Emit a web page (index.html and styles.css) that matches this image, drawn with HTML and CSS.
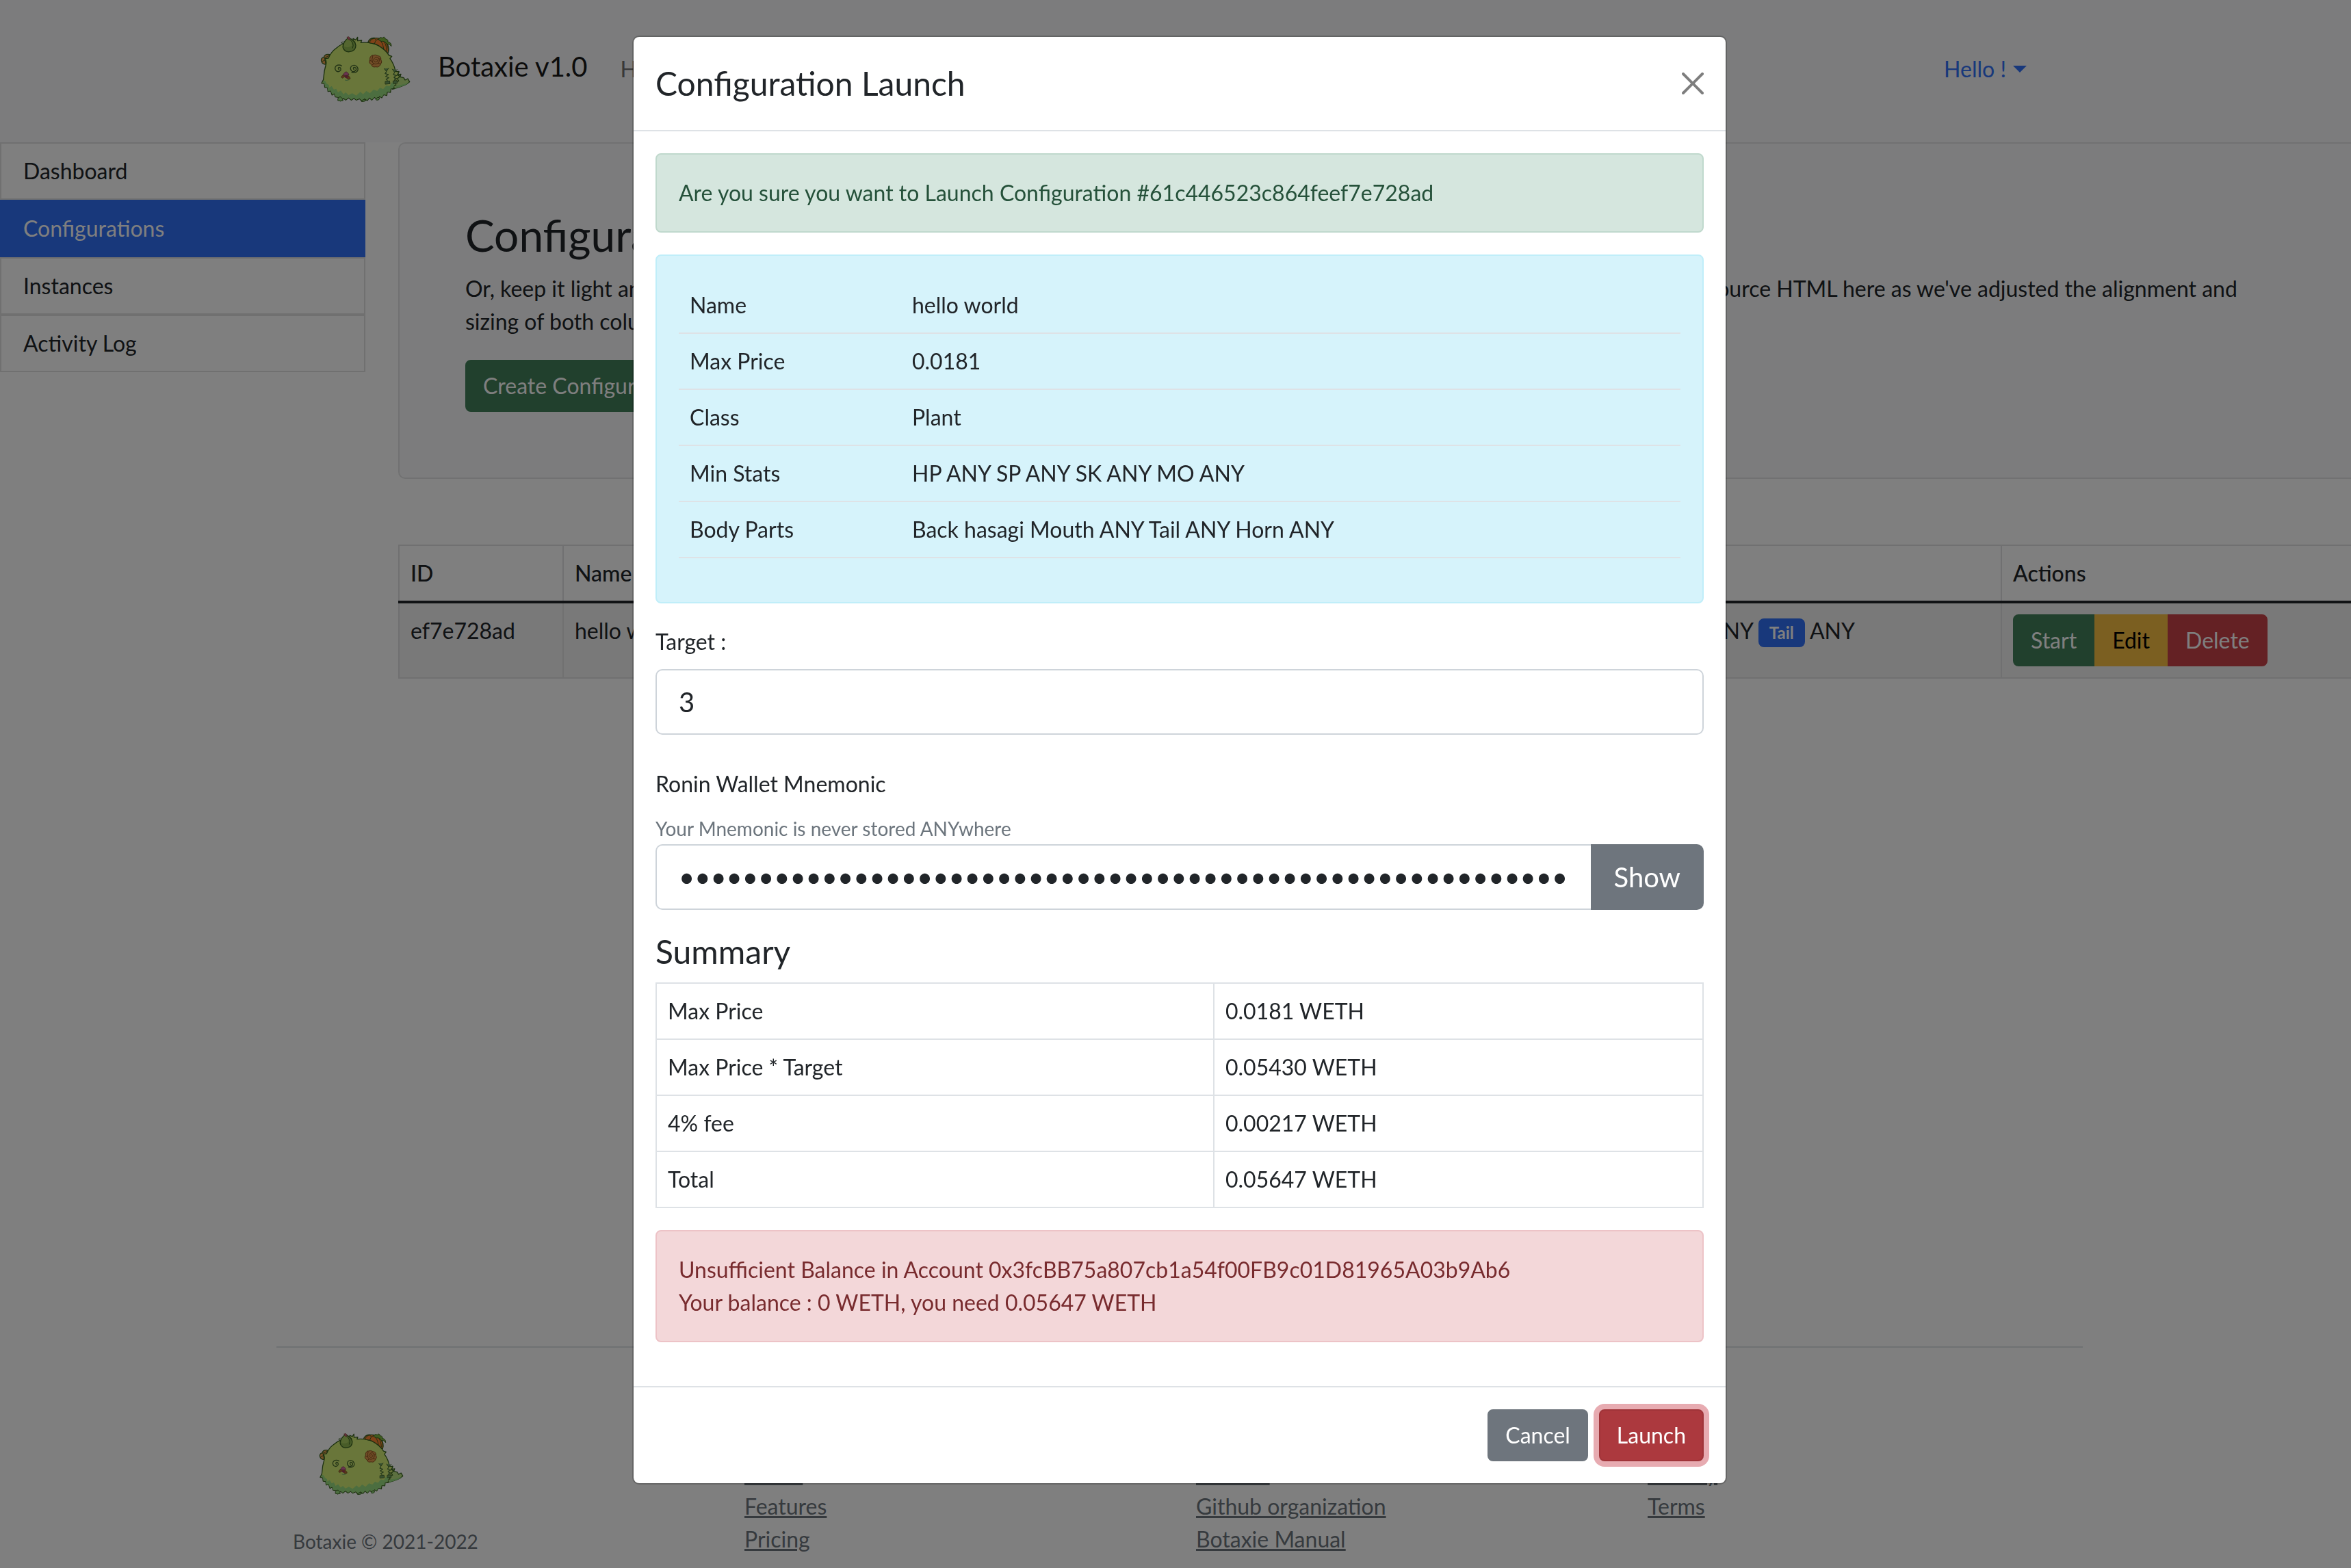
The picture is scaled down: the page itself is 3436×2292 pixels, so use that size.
FILE: index.html
```html
<!DOCTYPE html>
<html lang="en">
<head>
<meta charset="utf-8">
<title>Botaxie v1.0</title>
<link rel="stylesheet" href="styles.css">
</head>
<body>
<svg class="sprite" aria-hidden="true">
  <symbol id="axie" viewBox="84 66 396 292">
    <g stroke="#386020" stroke-width="4" stroke-linejoin="round" stroke-linecap="round">
      <path fill="#b8e080" d="M400 300 L412 230 L428 222 L424 236 L438 234 L434 246 L450 250 L456 260 L468 254 L476 268 Q462 284 408 298Z"/>
      <path fill="#98dc80" d="M420 284 Q452 280 474 270 Q460 286 408 298Z" stroke="none"/>
      <path fill="#f0a050" d="M126 148 Q104 144 100 160 Q84 164 90 180 Q96 194 112 190Z"/>
      <path fill="none" d="M102 162 Q116 158 122 152 M94 178 Q108 170 116 168 M104 164 L108 190" stroke-width="3"/>
      <path fill="#ff8430" d="M292 98 Q300 72 326 76 Q356 74 374 94 Q390 118 382 140 L340 116Z"/>
      <path fill="none" d="M312 76 Q320 84 316 104" stroke-width="3"/>
      <path fill="#d2ec74" d="M110 188 Q112 174 104 166 L120 164 Q132 136 152 122 Q170 106 190 98 L228 88 L228 78 L240 84 L248 72 L248 88 L266 86 L262 96 Q310 92 340 110 Q368 126 386 152 L398 156 L390 166 Q408 190 414 222 L430 224 L422 238 L434 244 L422 254 L428 264 L414 270 L416 282 L406 284 L408 298 L394 298 L392 314 L378 312 L376 328 L362 324 L354 338 L344 332 L334 346 L322 336 L310 348 L300 338 L290 350 L278 342 L268 354 L256 342 L242 348 L232 340 L220 348 L208 338 L196 348 L186 340 L172 352 L164 336 L150 334 L146 320 L136 326 L130 308 L118 310 L116 294 L104 292 L102 276 L90 274 L98 258 Q100 220 110 188Z"/>
      <path fill="#ff8430" d="M300 96 Q306 78 322 78 Q332 82 330 102Z" stroke-width="3"/>
      <path fill="#ff8430" d="M322 100 Q328 76 350 80 Q372 88 380 112 Q384 128 382 142 Q366 124 346 112 Q338 106 322 100Z" stroke-width="3"/>
      <path fill="none" d="M340 80 Q358 92 362 122 M358 84 Q374 98 376 132" stroke-width="3"/>
      <path fill="#80b840" d="M340 82 Q346 68 356 76 Q366 66 370 80 Q384 82 380 92 Q396 94 396 112 Q386 98 376 102 Q368 88 352 90Z" stroke-width="3"/>
      <path fill="#98dc80" stroke="none" d="M98 262 Q108 262 112 276 L122 282 L124 294 L134 286 L144 302 L154 298 L162 314 L174 306 L186 322 L196 314 L208 326 L224 318 L242 328 L260 312 L272 322 L286 308 L302 318 L318 302 L334 308 L346 294 L360 300 L374 284 L388 288 L398 270 L412 274 L404 296 L392 298 L390 312 L376 312 L374 324 L362 324 L354 336 L344 330 L334 342 L322 334 L310 346 L300 336 L290 348 L278 340 L268 350 L256 340 L242 346 L232 338 L220 346 L208 336 L196 346 L186 338 L172 348 L164 334 L150 332 L146 318 L136 322 L130 306 L118 308 L116 292 L106 290 L102 274 L94 272Z"/>
      <path fill="#98dc80" d="M162 340 Q164 332 174 334 Q184 342 184 350 Q172 354 162 350Z M264 350 Q274 342 286 348 Q280 356 266 354Z M328 344 Q334 332 344 338 Q346 348 332 348Z" stroke-width="3"/>
      <path fill="#90b850" d="M208 74 Q180 96 184 118 Q192 138 212 136 Q240 134 240 108 Q238 88 208 74Z"/>
      <path fill="#a8cc60" d="M208 76 Q184 98 190 114 Q206 120 222 110 Q226 90 208 76Z" stroke="none"/>
      <path fill="none" d="M184 92 L176 96 L186 104 M210 80 Q236 96 226 120 M220 80 L238 94" stroke-width="3"/>
      <path fill="#d06080" d="M202 72 Q208 66 214 74 L214 84 Q206 86 202 72Z" stroke="#805040" stroke-width="2"/>
      <path fill="#e0984c" stroke="#885020" stroke-width="3" d="M312 152 Q326 146 338 154 Q352 156 350 170 Q358 182 348 192 Q342 206 328 202 Q312 206 308 192 Q294 184 302 172 Q300 156 312 152Z"/>
      <path fill="none" stroke="#885020" stroke-width="3" d="M314 156 Q308 170 314 184 Q326 196 340 184 Q348 170 336 160 Q322 158 318 172 Q324 188 336 176 Q336 166 326 170 M302 174 L312 178 M312 194 L320 188 M348 190 L338 186 M348 168 L340 166"/>
    </g>
    <g fill="none" stroke="#44662c" stroke-width="4" stroke-linecap="round">
      <path d="M166 214 Q160 208 166 204 Q176 204 174 216 Q166 228 154 220 Q144 208 154 198 Q166 190 178 198"/>
      <path d="M232 214 Q226 208 232 204 Q242 204 242 214 Q236 226 224 222 Q212 212 220 200 Q232 190 244 200 Q254 212 246 222 Q236 232 222 226"/>
      <path fill="#70a060" stroke-width="3" d="M364 210 L374 222 L384 208 M374 222 L368 232 L384 236 L370 244 L386 250 L372 256 L380 264 M370 266 L388 264 L390 276 L370 278Z M400 212 L410 226 L422 214 M410 226 L404 236 L420 240 L406 248 L420 254 L408 262 M404 264 L420 262 L422 274 L406 276Z"/>
    </g>
    <path fill="#b07030" stroke="#684020" stroke-width="2" d="M176 248 Q180 234 196 238 Q214 240 216 254 L206 258 L200 250 L190 246 L182 252Z"/>
    <path fill="#d0689c" stroke="#703048" stroke-width="2" d="M184 238 Q192 222 200 224 Q210 232 210 238 Q196 242 184 238Z"/>
    <path fill="#a03858" d="M190 242 L206 242 L202 254 L192 248Z"/>
    <path fill="none" stroke="#70b070" stroke-width="3" d="M192 260 Q202 264 212 258"/>
  </symbol>
</svg>

<div class="page">
  <nav class="navbar">
    <div class="container navbar-inner">
      <a class="brand" href="#"><svg class="brand-logo" role="img" aria-label="Botaxie logo"><use href="#axie"/></svg><span class="brand-name">Botaxie v1.0</span></a>
      <a class="nav-link" href="#">Home</a>
      <a class="user-menu" href="#">Hello !<span class="caret"></span></a>
    </div>
  </nav>

  <main class="main">
    <aside class="sidebar">
      <a class="side-item" href="#">Dashboard</a>
      <a class="side-item active" href="#">Configurations</a>
      <a class="side-item" href="#">Instances</a>
      <a class="side-item" href="#">Activity Log</a>
    </aside>
    <div class="content">
      <section class="hero">
        <h2>Configurations</h2>
        <p>Or, keep it light and add a border for an added definition to the boundaries of your content. Be sure to look under the hood at the source HTML here as we've adjusted the alignment and sizing of both column's content for equal-height.</p>
        <button class="btn btn-success" type="button">Create Configuration</button>
      </section>
      <table class="table configs">
        <colgroup><col class="col-id"><col class="col-name"><col class="col-parts"><col></colgroup>
        <thead><tr><th>ID</th><th>Name</th><th>Body Parts</th><th>Actions</th></tr></thead>
        <tbody>
          <tr>
            <td>ef7e728ad</td>
            <td>hello world</td>
            <td class="parts"><span class="badge">Back</span> hasagi <span class="badge">Mouth</span> ANY <span class="badge">Tail</span> ANY</td>
            <td><div class="btn-group"><button class="btn btn-success" type="button">Start</button><button class="btn btn-warning" type="button">Edit</button><button class="btn btn-danger" type="button">Delete</button></div></td>
          </tr>
        </tbody>
      </table>
    </div>
  </main>

  <footer class="container footer">
    <div class="footer-col">
      <svg class="footer-logo" role="img" aria-label="Botaxie logo"><use href="#axie"/></svg>
      <div class="muted"><small>Botaxie © 2021-2022</small></div>
    </div>
    <div class="footer-col">
      <h5>Features</h5>
      <ul><li><a href="#">Home</a></li><li><a href="#">Features</a></li><li><a href="#">Pricing</a></li></ul>
    </div>
    <div class="footer-col">
      <h5>Resources</h5>
      <ul><li><a href="#">Discord</a></li><li><a href="#">Github organization</a></li><li><a href="#">Botaxie Manual</a></li></ul>
    </div>
    <div class="footer-col">
      <h5>About</h5>
      <ul><li><a href="#">Privacy</a></li><li><a href="#">Terms</a></li></ul>
    </div>
  </footer>
</div>

<div class="backdrop">
  <div class="modal" role="dialog" aria-modal="true" aria-labelledby="modal-title">
    <header class="modal-header">
      <h4 id="modal-title">Configuration Launch</h4>
      <button class="btn-close" type="button" aria-label="Close"><svg viewBox="0 0 16 16"><path d="M.293.293a1 1 0 011.414 0L8 6.586 14.293.293a1 1 0 111.414 1.414L9.414 8l6.293 6.293a1 1 0 01-1.414 1.414L8 9.414l-6.293 6.293a1 1 0 01-1.414-1.414L6.586 8 .293 1.707a1 1 0 010-1.414z"/></svg></button>
    </header>
    <div class="modal-body">
      <div class="alert alert-success">Are you sure you want to Launch Configuration #61c446523c864feef7e728ad</div>
      <div class="alert alert-info">
        <table class="table details">
          <tbody>
            <tr><td>Name</td><td>hello world</td></tr>
            <tr><td>Max Price</td><td>0.0181</td></tr>
            <tr><td>Class</td><td>Plant</td></tr>
            <tr><td>Min Stats</td><td>HP ANY SP ANY SK ANY MO ANY</td></tr>
            <tr><td>Body Parts</td><td>Back hasagi Mouth ANY Tail ANY Horn ANY</td></tr>
          </tbody>
        </table>
      </div>
      <div class="field">
        <label for="target">Target :</label>
        <input class="input" id="target" type="text" inputmode="numeric" value="3">
      </div>
      <div class="field field-wallet">
        <label for="mnemonic">Ronin Wallet Mnemonic</label>
        <div class="muted"><small>Your Mnemonic is never stored ANYwhere</small></div>
        <div class="input-group">
          <input class="input" id="mnemonic" type="password" value="xxxxxxxxxxxxxxxxxxxxxxxxxxxxxxxxxxxxxxxxxxxxxxxxxxxxxxxx">
          <button class="btn btn-secondary btn-lg" type="button">Show</button>
        </div>
      </div>
      <h4 class="summary-title">Summary</h4>
      <table class="table summary">
        <tbody>
          <tr><td>Max Price</td><td>0.0181 WETH</td></tr>
          <tr><td>Max Price * Target</td><td>0.05430 WETH</td></tr>
          <tr><td>4% fee</td><td>0.00217 WETH</td></tr>
          <tr><td>Total</td><td>0.05647 WETH</td></tr>
        </tbody>
      </table>
      <div class="alert alert-danger">Unsufficient Balance in Account 0x3fcBB75a807cb1a54f00FB9c01D81965A03b9Ab6<br>Your balance : 0 WETH, you need 0.05647 WETH</div>
    </div>
    <footer class="modal-footer">
      <button class="btn btn-secondary" type="button">Cancel</button>
      <button class="btn btn-launch" type="button">Launch</button>
    </footer>
  </div>
</div>
</body>
</html>
```
FILE: styles.css
```css
*, *::before, *::after { box-sizing: border-box; }

html { overflow: hidden; }

body {
  margin: 0;
  overflow: hidden;
  background: #fff;
  color: #212529;
  font-family: Lato, "Liberation Sans", sans-serif;
  font-size: 32px;
  line-height: 48px;
  font-variant-ligatures: common-ligatures;
}

h2, h4, h5, p, ul { margin: 0; }
h2, h4, h5 { font-weight: 400; }
a { color: inherit; }
button, input { font: inherit; color: inherit; }
small { font-size: 28px; line-height: 42px; }

.sprite { display: none; }
.muted { color: #6c757d; }

/* The page keeps the 12px scrollbar gutter in its width. */
.page {
  display: flex;
  flex-direction: column;
  min-height: 100vh;
  margin-right: -12px;
}

.container {
  width: 100%;
  max-width: 2640px;
  margin: 0 auto;
}

/* Navigation */
.navbar { background: #f8f9fa; padding: 52px 0 58px; }
.navbar-inner { display: flex; align-items: center; padding: 0 24px; }
.navbar a { text-decoration: none; }
.brand { display: flex; align-items: center; margin-right: 32px; color: #181818; }
.brand-logo { width: 132px; height: 98px; margin: 0 40px; }
.brand-name { font-size: 40px; padding-bottom: 8px; }
.nav-link { padding: 0 16px; color: #707172; }
.user-menu { display: flex; align-items: center; margin: 0 58px 0 auto; color: #3070f6; }
.caret {
  margin-left: 10px;
  border: 10px solid transparent;
  border-top-color: currentColor;
  border-bottom: 0;
}

/* Columns */
.main {
  flex: 1;
  display: grid;
  grid-template-columns: 534px minmax(0, 1fr);
  gap: 48px;
  align-items: start;
}
.side-item {
  display: block;
  padding: 16px 32px;
  border: 2px solid #e0e0e0;
  text-decoration: none;
}
.side-item.active { background: #3070f6; border-color: #3070f6; color: #fff; }

.hero {
  margin-bottom: 96px;
  padding: 96px;
  border: 2px solid #e2e3e4;
  border-radius: 10px;
  background: #f8f9fa;
}
.hero h2 { margin-bottom: 16px; font-size: 64px; line-height: 76px; }
.hero p { margin-bottom: 32px; }

/* Buttons */
.btn {
  display: block;
  padding: 12px 24px;
  border: 2px solid transparent;
  border-radius: 8px;
}
.btn-success { background: #42805a; border-color: #42805a; color: #fff; }
.btn-warning { background: #f6be42; border-color: #f6be42; color: #000; }
.btn-danger { background: #c84248; border-color: #c84248; color: #fff; }
.btn-secondary { background: #6e757d; border-color: #6e757d; color: #fff; }
.btn-launch {
  background: #ac393e;
  border-color: #a03439;
  color: #fff;
  box-shadow: 0 0 0 8px #e7abb1;
}
.btn-lg { padding: 16px 32px; font-size: 40px; line-height: 60px; }
.btn-group { display: flex; }
.btn-group .btn { border-radius: 0; }
.btn-group .btn:first-child { border-radius: 8px 0 0 8px; }
.btn-group .btn:last-child { border-radius: 0 8px 8px 0; }

/* Tables */
.table { width: 100%; border-collapse: collapse; }
.table td, .table th { padding: 16px; text-align: left; vertical-align: top; font-weight: 400; }

.configs { table-layout: fixed; }
.configs td, .configs th { border: 2px solid #e0e1e3; }
.configs th { border-bottom: 4px solid #212529; font-weight: 500; }
.configs td { background: #f2f2f2; }
.col-id { width: 240px; }
.col-name { width: 1260px; }
.col-parts { width: 842px; }
.configs .parts { text-align: right; padding-right: 213px; white-space: nowrap; }
.badge {
  display: inline-block;
  padding: 9px 16px;
  border-radius: 8px;
  background: #3070f6;
  color: #fff;
  font-size: 24px;
  font-weight: 700;
  line-height: 24px;
}

/* Footer */
.footer {
  display: grid;
  grid-template-columns: repeat(4, 1fr);
  padding: 96px 0 16px;
  border-top: 2px solid #dee2e6;
}
.footer-col { padding: 0 24px; }
.footer-logo { display: block; width: 124px; height: 92px; margin: 28px 38px 42px; }
.footer h5 { margin-bottom: 16px; font-size: 40px; }
.footer ul { padding: 0; list-style: none; color: #6c757d; }

/* Modal */
.backdrop {
  position: fixed;
  inset: 0 -12px 0 0;
  padding: 52px 0;
  background: rgba(0, 0, 0, 0.5);
}
.modal {
  max-width: 1600px;
  margin: 0 auto;
  border: 2px solid rgba(0, 0, 0, 0.2);
  border-radius: 10px;
  background: #fff;
  background-clip: padding-box;
}
.modal-header {
  display: flex;
  align-items: center;
  justify-content: space-between;
  padding: 32px;
  border-bottom: 2px solid #dee2e6;
}
.modal-header h4 { font-size: 48px; line-height: 72px; }
.btn-close { width: 32px; height: 32px; padding: 0; border: 0; background: none; opacity: 0.5; }
.btn-close svg { display: block; }
.modal-body { padding: 32px; }
.modal-footer {
  display: flex;
  justify-content: flex-end;
  gap: 16px;
  padding: 32px;
  border-top: 2px solid #dee2e6;
}

.alert { margin-bottom: 32px; padding: 32px; border: 2px solid; border-radius: 8px; }
.alert-success { background: #d5e6de; border-color: #c0d9cd; color: #25513a; }
.alert-info { background: #d6f3fb; border-color: #c0eef9; }
.alert-danger { background: #f3d7d9; border-color: #edc3c7; color: #782b2e; }

.details { margin-bottom: 32px; border-collapse: separate; border-spacing: 0; color: #212529; }
.details td { border-bottom: 2px solid #dee2e6; }
.details td:first-child { width: 325px; }

.field { margin-bottom: 48px; }
.field-wallet { margin-bottom: 32px; }
.field label { display: block; margin-bottom: 16px; }
.input {
  display: block;
  width: 100%;
  height: 96px;
  padding: 16px 32px;
  border: 2px solid #ced4da;
  border-radius: 10px;
  background: #fff;
  font-size: 40px;
  line-height: 60px;
}
.input-group { display: flex; }
.input-group .input { flex: 1; min-width: 0; border-right: 0; border-radius: 10px 0 0 10px; }
.input-group .btn { border-radius: 0 10px 10px 0; }

.summary-title { margin-bottom: 16px; font-size: 48px; line-height: 58px; }
.summary { margin-bottom: 32px; }
.summary td { border: 2px solid #dee2e6; }
.summary td:first-child { width: 815px; }
```
